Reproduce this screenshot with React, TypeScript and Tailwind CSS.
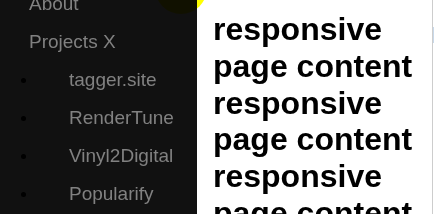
const projects = ["tagger.site", "RenderTune", "Vinyl2Digital", "Popularify"];

function NavLink({ label }: { label: string }) {
  return (
    <a href="#" className="block h-[38px] pl-[29px] leading-[38px] text-[#818181] whitespace-nowrap">
      {label}
    </a>
  );
}

function SubLink({ label }: { label: string }) {
  return (
    <li className="flex h-[38px] items-center">
      <span className="ml-[21px] mt-[1px] h-[5px] w-[5px] rounded-full bg-black" />
      <a href="#" className="ml-[43px] leading-[38px] text-[#818181] whitespace-nowrap">
        {label}
      </a>
    </li>
  );
}

export default function App() {
  const text = Array.from({ length: 4 }, () => "responsive page content").join(" ");

  return (
    <div className="relative flex h-[214px] w-[434px] overflow-hidden bg-white font-['Liberation_Sans',Arial,sans-serif]">
      <nav className="w-[197px] shrink-0 bg-[#111111] text-[19px]">
        <div className="-mt-[15px]">
          <NavLink label="About" />
          <NavLink label="Projects X" />
          <ul>
            {projects.map((p) => (
              <SubLink key={p} label={p} />
            ))}
          </ul>
        </div>
      </nav>

      <main className="flex-1 px-4 pt-[11px]">
        <p className="text-[32px] font-bold leading-[36.8px] text-black">{text}</p>
      </main>

      <div className="w-[2px] shrink-0 border-l border-[#cdcdcd]">
        <div className="mt-[27px] h-[16px] w-[1px] bg-[#c9d9ea]" />
      </div>

      {/* yellow blob sitting over the sidebar edge */}
      <div className="pointer-events-none absolute left-[155px] top-[-38px] h-[52px] w-[52px] rounded-full bg-[#ffff00] mix-blend-multiply" />
    </div>
  );
}
